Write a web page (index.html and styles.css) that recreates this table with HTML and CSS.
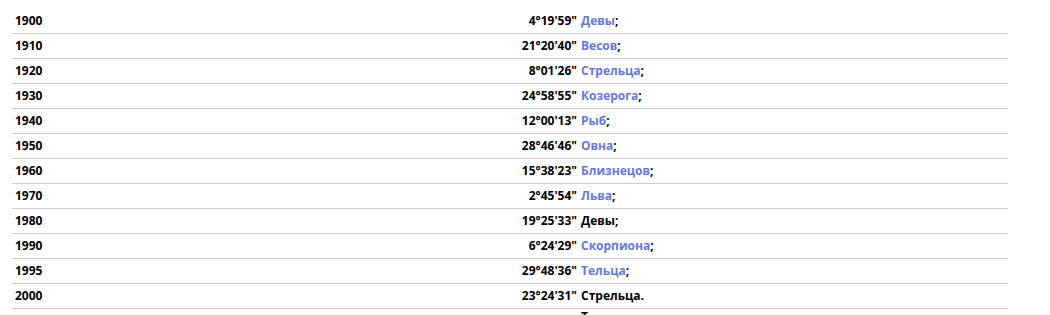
FILE: index.html
```html
<!DOCTYPE html>
<html lang="ru">
<head>
<meta charset="utf-8">
<link rel="stylesheet" href="styles.css">
</head>
<body>
<div class="wrap">
<table class="tbl">
<tbody>
<tr><td class="year">1900</td><td class="deg">4°19'59"</td><td class="sign"><a href="#">Девы</a>;</td></tr>
<tr><td class="year">1910</td><td class="deg">21°20'40"</td><td class="sign"><a href="#">Весов</a>;</td></tr>
<tr><td class="year">1920</td><td class="deg">8°01'26"</td><td class="sign"><a href="#">Стрельца</a>;</td></tr>
<tr><td class="year">1930</td><td class="deg">24°58'55"</td><td class="sign"><a href="#">Козерога</a>;</td></tr>
<tr><td class="year">1940</td><td class="deg">12°00'13"</td><td class="sign"><a href="#">Рыб</a>;</td></tr>
<tr><td class="year">1950</td><td class="deg">28°46'46"</td><td class="sign"><a href="#">Овна</a>;</td></tr>
<tr><td class="year">1960</td><td class="deg">15°38'23"</td><td class="sign"><a href="#">Близнецов</a>;</td></tr>
<tr><td class="year">1970</td><td class="deg">2°45'54"</td><td class="sign"><a href="#">Льва</a>;</td></tr>
<tr><td class="year">1980</td><td class="deg">19°25'33"</td><td class="sign">Девы;</td></tr>
<tr><td class="year">1990</td><td class="deg">6°24'29"</td><td class="sign"><a href="#">Скорпиона</a>;</td></tr>
<tr><td class="year">1995</td><td class="deg">29°48'36"</td><td class="sign"><a href="#">Тельца</a>;</td></tr>
<tr><td class="year">2000</td><td class="deg">23°24'31"</td><td class="sign">Стрельца.</td></tr>
<tr class="next"><td class="year"></td><td class="deg"></td><td class="sign">Т</td></tr>
</tbody>
</table>
</div>
</body>
</html>
```
FILE: styles.css
```css
html, body {
  margin: 0;
  padding: 0;
  background: #ffffff;
}
body {
  font-family: "Open Sans", "Noto Sans", "DejaVu Sans", sans-serif;
  font-size: 12px;
  font-weight: 700;
  color: #000000;
}
.wrap {
  padding: 9px 42px 0 12px;
}
.tbl {
  width: 996px;
  border-collapse: collapse;
  table-layout: fixed;
}
.tbl td {
  height: 24px;
  padding: 0;
  border-bottom: 1px solid #cccccc;
  line-height: 24px;
  white-space: nowrap;
  vertical-align: middle;
}
.tbl .year {
  width: 200px;
  padding-left: 3px;
}
.tbl .deg {
  width: 362px;
  text-align: right;
}
.tbl .sign {
  padding-left: 4px;
}
.tbl a {
  color: #6677dd;
  text-decoration: none;
}
.tbl .next td {
  border-bottom: none;
  vertical-align: top;
  line-height: 16px;
}
```
